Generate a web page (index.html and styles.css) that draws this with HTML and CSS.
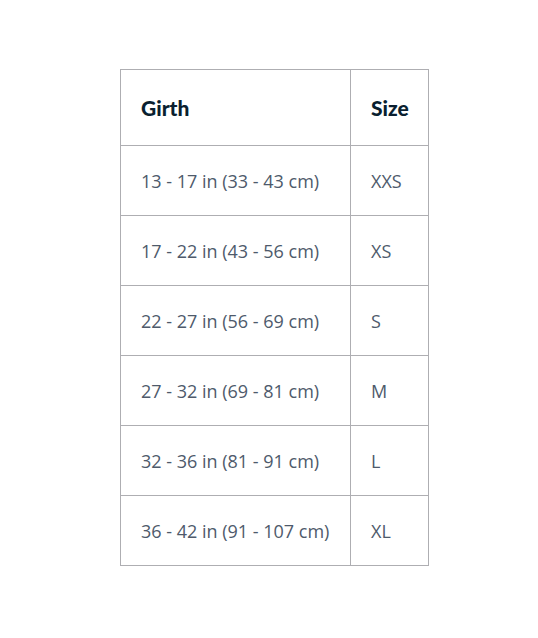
FILE: index.html
```html
<!DOCTYPE html>
<html>
<head>
<meta charset="utf-8">
<link rel="stylesheet" href="styles.css">
</head>
<body>
<table class="size-table">
  <thead>
    <tr><th class="col-girth">Girth</th><th class="col-size">Size</th></tr>
  </thead>
  <tbody>
    <tr><td>13 - 17 in (33 - 43 cm)</td><td>XXS</td></tr>
    <tr><td>17 - 22 in (43 - 56 cm)</td><td>XS</td></tr>
    <tr><td>22 - 27 in (56 - 69 cm)</td><td>S</td></tr>
    <tr><td>27 - 32 in (69 - 81 cm)</td><td>M</td></tr>
    <tr><td>32 - 36 in (81 - 91 cm)</td><td>L</td></tr>
    <tr><td>36 - 42 in (91 - 107 cm)</td><td>XL</td></tr>
  </tbody>
</table>
</body>
</html>
```
FILE: styles.css
```css
html, body { margin: 0; padding: 0; background: #fff; }
body { padding: 69px 0 0 120px; }
.size-table {
  border-collapse: collapse;
  font-family: "Open Sans", sans-serif;
  font-size: 18px;
  color: #4e5a6b;
  table-layout: fixed;
  width: 307px;
}
.size-table th, .size-table td {
  border: 1px solid #aeaeb2;
  padding: 0 0 0 20px;
  text-align: left;
  vertical-align: middle;
}
.size-table th {
  height: 75px;
  font-family: Lato, "Open Sans", sans-serif;
  font-weight: 900;
  font-size: 21px;
  color: #0a1f30;
}
.size-table td { height: 69px; }
.col-girth { width: 209px; }
.col-size { width: 57px; }
```
